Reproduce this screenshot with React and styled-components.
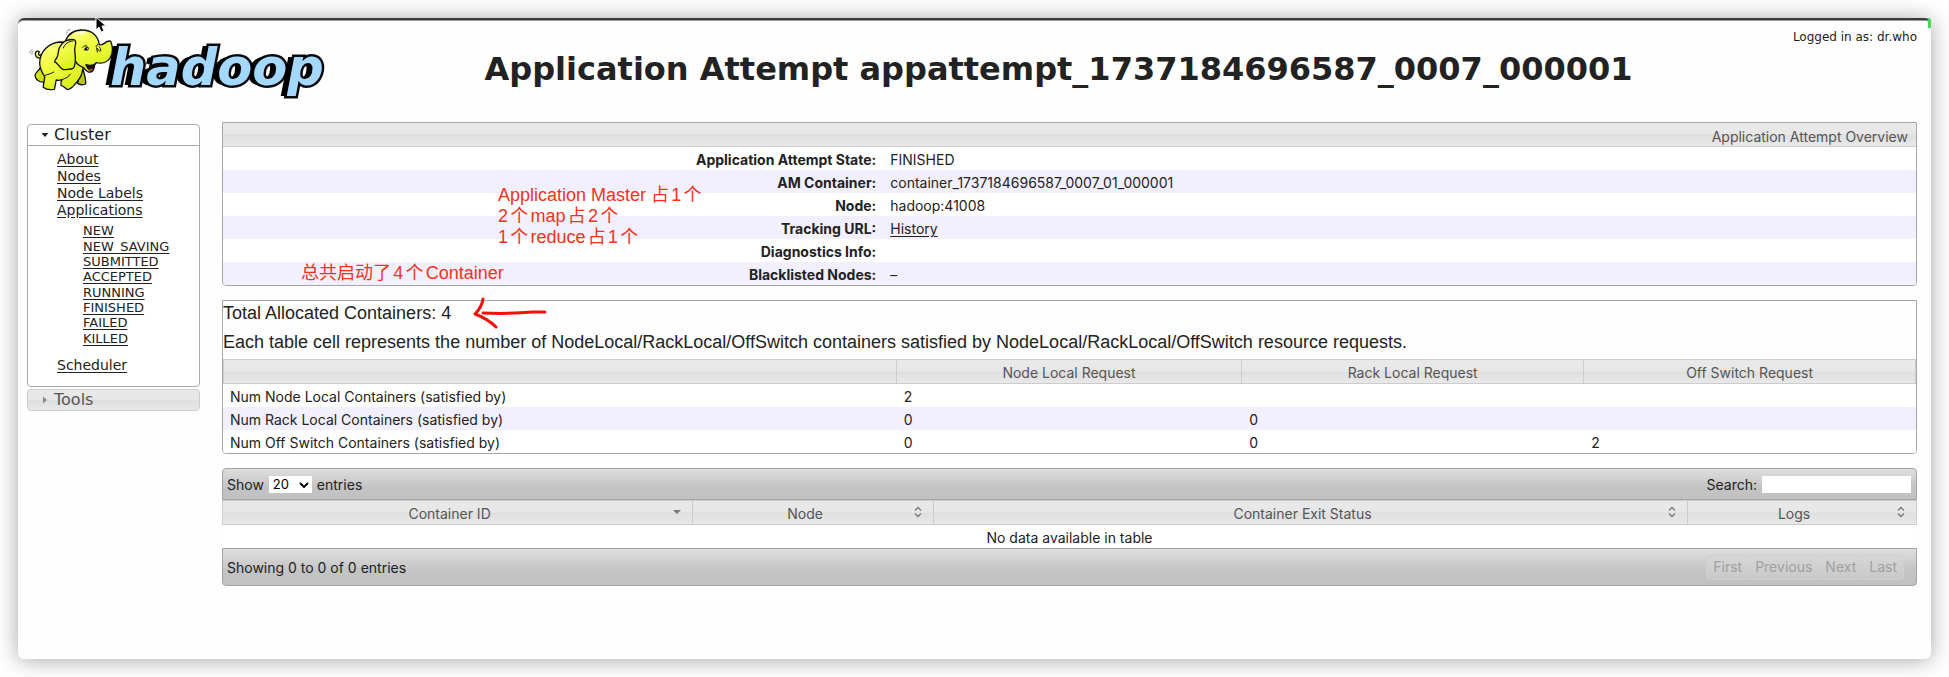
import React from 'react';
import styled, { createGlobalStyle } from 'styled-components';

const sans = '"Inter", "Liberation Sans", "Noto Sans CJK SC", sans-serif';
const wide = '"DejaVu Sans", sans-serif';
const grotesk = '"Liberation Sans", "Noto Sans CJK SC", sans-serif';
const glass = 'linear-gradient(#e9e9e9, #e7e7e7 48%, #dfdfdf 52%, #e8e8e8)';
const steel = 'linear-gradient(#dedede, #c3c3c3 62%, #c1c1c1)';

const GlobalStyle = createGlobalStyle`
  *, *::before, *::after { box-sizing: border-box; }
  body { margin: 0; background: #fff; color: #222; font: 14px ${sans}; }
  a { color: inherit; text-underline-offset: 2px; }
`;

const Desk = styled.div`
  display: flex;
  min-height: 100vh;
  padding: 18px;
`;

const Window = styled.div`
  position: relative;
  flex: 1;
  min-width: 0;
  background: #fefefe;
  border-top: 2px solid #3a3a3a;
  border-radius: 6px;
  box-shadow: 0 1px 22px rgba(0, 0, 0, 0.36), inset 0 1px 0 #9a9a9a;
`;

const GreenTab = styled.span`
  position: absolute;
  top: -2px;
  right: 0;
  width: 3px;
  height: 10px;
  border-top-right-radius: 3px;
  background: #43d85c;
`;

const Pointer = styled.svg`
  position: absolute;
  left: 77px;
  top: -4px;
  width: 12px;
  height: 18px;
`;

const Header = styled.header`
  display: flex;
  align-items: flex-start;
  height: 102px;
  padding: 8px 14px 0 10px;
`;

const Logo = styled.a`
  display: flex;
  flex: none;
  width: 300px;
  text-decoration: none;
`;

const Elephant = styled.svg`
  position: relative;
  z-index: 1;
  flex: none;
  width: 88px;
  height: 65px;
`;

const Wordmark = styled.span`
  margin: 10px 0 0 -6px;
  font: italic bold 51px/60px ${wide};
  color: #a5d8ff;
  -webkit-text-stroke: 5px #0a0a0a;
  paint-order: stroke fill;
  text-shadow: -2px 0 #000, -4px 0 #000, -6px 0 #000;
`;

const Title = styled.h1`
  flex: 1;
  margin: 21px 0 0;
  font: bold 32px/40px ${wide};
  text-align: center;
  white-space: nowrap;
`;

const User = styled.div`
  flex: none;
  width: 128px;
  font: 12px/18px ${wide};
  text-align: right;
  white-space: nowrap;
`;

const Body = styled.div`
  display: flex;
  align-items: flex-start;
  gap: 22px;
  padding: 0 14px 0 9px;
`;

const Sidebar = styled.nav`
  display: flex;
  flex: none;
  flex-direction: column;
  gap: 2px;
  width: 173px;
  padding-top: 2px;
  font-family: ${wide};
`;

const Section = styled.section`
  border: 1px solid #aaa;
  border-color: ${(p) => (p.$open ? '#aaa' : '#ccc')};
  border-radius: 4px;
  background: ${(p) => (p.$open ? '#fff' : glass)};
`;

const SectionToggle = styled.button`
  display: flex;
  align-items: center;
  gap: 4px;
  width: 100%;
  height: ${(p) => (p.$open ? 21 : 20)}px;
  padding: 0 0 0 12px;
  border: 0;
  border-bottom: ${(p) => (p.$open ? '1px solid #aaa' : '0')};
  background: none;
  color: ${(p) => (p.$open ? '#222' : '#555')};
  font: 16px/20px ${wide};
`;

const Links = styled.ul`
  margin: 0;
  padding: 5px 0 12px 29px;
  list-style: none;
  font-size: 14px;
  line-height: 17px;
`;

const StateLinks = styled.ul`
  display: grid;
  grid-auto-rows: 1fr;
  align-items: center;
  height: 123px;
  margin: 4px 0 11px;
  padding: 0 0 0 26px;
  list-style: none;
  font-size: 13px;
  line-height: 15px;
`;

const Main = styled.main`
  position: relative;
  display: flex;
  flex: 1;
  flex-direction: column;
  gap: 14px;
  min-width: 0;
`;

const Panel = styled.section`
  border: 1px solid #a6a6a6;
  border-radius: 0 0 4px 4px;
  overflow: hidden;
`;

const PanelHead = styled.h2`
  height: 24px;
  margin: 0;
  padding: 3px 8px 0;
  border-bottom: 1px solid #ccc;
  background: ${glass};
  color: #555;
  font: 14px/22px ${sans};
  text-align: right;
`;

const Table = styled.table`
  width: 100%;
  table-layout: fixed;
  border-collapse: separate;
  border-spacing: 0;
`;

const Row = styled.tr`
  height: 23px;
  background: ${(p) => (p.$tint ? '#f2f0ff' : '#fff')};
`;

const Label = styled.th`
  width: 39%;
  padding: 3px 7px 0;
  font-weight: 700;
  line-height: 20px;
  text-align: right;
`;

const Cell = styled.td`
  padding: 3px 7px 0;
  line-height: 20px;
  text-align: ${(p) => p.$align || 'left'};
`;

const RowName = styled.th`
  padding: 3px 7px 0;
  font-weight: 400;
  line-height: 20px;
  text-align: left;
`;

const ColumnHead = styled.th`
  width: ${(p) => p.$width || 'auto'};
  height: 25px;
  padding: 2px 7px 0;
  border: 1px solid #ccc;
  border-left-width: ${(p) => (p.$first ? 1 : 0)}px;
  background: ${glass};
  color: #555;
  font-weight: 400;
  line-height: 20px;
`;

const Note = styled.p`
  margin: 0 0 5px;
  font: 18px/24px ${grotesk};
`;

const SortButton = styled.button`
  display: flex;
  align-items: center;
  width: 100%;
  padding: 0;
  border: 0;
  background: none;
  color: inherit;
  font: 14px/20px ${sans};

  span { flex: 1; }
  svg { flex: none; margin-bottom: 4px; }
`;

const Bar = styled.div`
  display: flex;
  align-items: center;
  justify-content: space-between;
  height: ${(p) => (p.$bottom ? 38 : 32)}px;
  padding: 0 ${(p) => (p.$bottom ? 12 : 5)}px 0 4px;
  border: 1px solid #a3a3a3;
  border-radius: ${(p) => (p.$bottom ? '0 0 4px 4px' : '4px 4px 0 0')};
  background: ${steel};
`;

const Field = styled.label`
  display: flex;
  align-items: center;
  gap: 5px;
`;

const SizePicker = styled.span`
  position: relative;
  display: flex;

  svg { position: absolute; right: 3px; top: 6px; pointer-events: none; }
`;

const Select = styled.select`
  appearance: none;
  width: 43px;
  height: 17px;
  padding: 0 4px;
  border: 0;
  border-radius: 0;
  background: #fff;
  color: #000;
  font: 13px/17px ${sans};
`;

const SearchInput = styled.input`
  width: 149px;
  height: 17px;
  padding: 0 2px;
  border: 0;
  background: #fff;
  font: 13px ${sans};
`;

const Pager = styled.div`
  display: flex;
  height: 25px;
`;

const PageButton = styled.button`
  padding: 0 6px;
  border: 1px solid #cfcfcf;
  border-left-width: ${(p) => (p.$first ? 1 : 0)}px;
  border-radius: ${(p) => (p.$first ? '4px 0 0 4px' : p.$last ? '0 4px 4px 0' : 0)};
  background: linear-gradient(#d6d6d6, #c9c9c9);
  color: #a0a0a0;
  font: 14px/20px ${sans};
`;

const Remark = styled.div`
  position: absolute;
  left: ${(p) => p.$x}px;
  top: ${(p) => p.$y}px;
  color: #f6301b;
  font: 18px/21px ${grotesk};
  text-autospace: normal;
  white-space: pre;
`;

const RedArrow = styled.svg`
  position: absolute;
  left: 250px;
  top: 174px;
  width: 80px;
  height: 34px;
`;

const Caret = ({ open }) => (
  <svg width="10" height="10" viewBox="0 0 10 10" aria-hidden="true">
    <path d={open ? 'M1.5 3h7L5 7z' : 'M3 1.5v7L7 5z'} fill={open ? '#222' : '#888'} />
  </svg>
);

const SortIcon = ({ active }) => (
  <svg width="16" height="12" viewBox="0 0 16 12" aria-hidden="true">
    {active ? (
      <path d="M4 4h8L8 8z" fill="#777" />
    ) : (
      <path d="M5 4.5 8 1.5l3 3M5 7.5l3 3 3-3" fill="none" stroke="#777" strokeWidth="1.3" />
    )}
  </svg>
);

const HadoopElephant = () => (
  <Elephant viewBox="24 24 264 195" aria-hidden="true">
    <defs>
      <linearGradient id="hide" x1="0" y1="0" x2="0.5" y2="1">
        <stop offset="0" stopColor="#fbffa0" />
        <stop offset="0.4" stopColor="#f3ff4a" />
        <stop offset="1" stopColor="#dcf01c" />
      </linearGradient>
    </defs>
    <g stroke="#111" strokeWidth="4" strokeLinejoin="round" strokeLinecap="round" fill="url(#hide)">
      <path d="M64 112C54 118 45 110 46 100c1-7 9-9 12-4-3 3-4 8 1 10l8-4" />
      <path d="M176 150c4 14 1 26-3 40 8 5 17 5 24 2 1-14-3-28-8-44z" fill="#b9ca08" />
      <path d="M62 142c-5 10-17 16-17 24 1 12 14 22 27 20l14-18z" fill="#d0e212" />
      <path d="M122 66C84 68 60 96 59 128c0 18 8 31 15 42 0 12-5 22-4 32 8 7 22 8 33 6 3-9 3-19 6-28 6 2 11 1 17-1-3 6-4 12-3 17 8 2 13 9 19 13 8-1 17-9 22-15 8-9 17-19 21-32l7-30-18-62z" />
      <path d="M136 64c8-22 26-34 50-34 28 0 48 16 52 44 9 3 15-4 22-9 5-2 9-3 12-1 7 17 6 36-1 49-9 14-26 19-42 15-6 4-8 10-8 18-2 8-9 12-16 10-7-3-10-9-16-14-14-5-24-16-27-30z" />
      <path d="M198 134c9 3 17 3 26-1-1 8-2 15-7 20-10 0-15-9-19-19z" fill="#151500" />
      <path d="M206 149c4-4 9-4 13-1-3 6-9 6-13 1z" fill="#b4432c" stroke="none" />
      <path d="M162 59c-20-3-37 7-44 24-4 10-2 20-7 29-4 7-8 10-7 14 10 1 12 18 25 22 7 3 16-2 25-1 9 0 12-17 12-29 1-14-4-25-1-38 2-10 6-16-3-21z" />
      <path d="M130 84c5-13 15-20 29-21" fill="none" strokeWidth="3" />
      <path d="M76 166c8-4 15-3 25-10M128 178c10-3 18-7 23-16" fill="none" strokeWidth="3" />
      <path d="M188 82c3-4 8-6 13-4M228 80l7-9M232 96l-2-13 8 10M237 80c4 3 6 8 5 13" fill="none" strokeWidth="3" />
      <path d="M193 90c1-8 7-11 13-7 2 6-4 11-13 7z" fill="#111" strokeWidth="1" />
    </g>
    <circle cx="203" cy="86" r="2" fill="#fff" />
    <path d="M164 43c10-9 25-9 34-3-7 5-23 2-34 3z" fill="#fdffd6" />
    <path d="M29 100c1-6 4-9 8-11M36 104c-1-4 1-9 4-11M140 34c2-4 6-5 12-5M139 43c0-3 1-6 4-7" fill="none" stroke="#777" strokeWidth="2.5" />
  </Elephant>
);

const states = ['NEW', 'NEW_SAVING', 'SUBMITTED', 'ACCEPTED', 'RUNNING', 'FINISHED', 'FAILED', 'KILLED'];

const overview = [
  ['Application Attempt State:', 'FINISHED'],
  ['AM Container:', 'container_1737184696587_0007_01_000001'],
  ['Node:', 'hadoop:41008'],
  ['Tracking URL:', <a href="#history" key="history">History</a>],
  ['Diagnostics Info:', ''],
  ['Blacklisted Nodes:', '–'],
];

const requests = [
  ['Num Node Local Containers (satisfied by)', '2', '', ''],
  ['Num Rack Local Containers (satisfied by)', '0', '0', ''],
  ['Num Off Switch Containers (satisfied by)', '0', '0', '2'],
];

const columns = [
  ['Container ID', '27.8%'],
  ['Node', '14.2%'],
  ['Container Exit Status', '44.5%'],
  ['Logs', 'auto'],
];

export default function App() {
  return (
    <Desk>
      <GlobalStyle />
      <Window>
        <Header>
          <Logo href="#home">
            <HadoopElephant />
            <Wordmark>hadoop</Wordmark>
          </Logo>
          <Title>Application Attempt appattempt_1737184696587_0007_000001</Title>
          <User>Logged in as: dr.who</User>
        </Header>

        <Body>
          <Sidebar>
            <Section $open>
              <SectionToggle $open type="button">
                <Caret open />
                Cluster
              </SectionToggle>
              <Links>
                <li><a href="#about">About</a></li>
                <li><a href="#nodes">Nodes</a></li>
                <li><a href="#labels">Node Labels</a></li>
                <li>
                  <a href="#apps">Applications</a>
                  <StateLinks>
                    {states.map((s) => (
                      <li key={s}><a href={`#${s}`}>{s}</a></li>
                    ))}
                  </StateLinks>
                </li>
                <li><a href="#scheduler">Scheduler</a></li>
              </Links>
            </Section>
            <Section>
              <SectionToggle type="button">
                <Caret />
                Tools
              </SectionToggle>
            </Section>
          </Sidebar>

          <Main>
            <Panel>
              <PanelHead>Application Attempt Overview</PanelHead>
              <Table>
                <tbody>
                  {overview.map(([label, value], i) => (
                    <Row key={label} $tint={i % 2 === 1}>
                      <Label scope="row">{label}</Label>
                      <Cell>{value}</Cell>
                    </Row>
                  ))}
                </tbody>
              </Table>
            </Panel>

            <Panel>
              <Note>Total Allocated Containers: 4</Note>
              <Note>
                Each table cell represents the number of NodeLocal/RackLocal/OffSwitch containers
                satisfied by NodeLocal/RackLocal/OffSwitch resource requests.
              </Note>
              <Table>
                <thead>
                  <tr>
                    <ColumnHead $first $width="39.8%" />
                    <ColumnHead $width="20.4%">Node Local Request</ColumnHead>
                    <ColumnHead $width="20.2%">Rack Local Request</ColumnHead>
                    <ColumnHead>Off Switch Request</ColumnHead>
                  </tr>
                </thead>
                <tbody>
                  {requests.map(([name, ...values], i) => (
                    <Row key={name} $tint={i % 2 === 1}>
                      <RowName scope="row">{name}</RowName>
                      {values.map((v, n) => <Cell key={n}>{v}</Cell>)}
                    </Row>
                  ))}
                </tbody>
              </Table>
            </Panel>

            <section>
              <Bar>
                <Field>
                  Show
                  <SizePicker>
                    <Select defaultValue="20">
                      <option>20</option>
                      <option>40</option>
                      <option>60</option>
                    </Select>
                    <svg width="10" height="6" viewBox="0 0 10 6" aria-hidden="true">
                      <path d="M1 1l4 4 4-4" fill="none" stroke="#000" strokeWidth="2" />
                    </svg>
                  </SizePicker>
                  entries
                </Field>
                <Field>
                  Search:
                  <SearchInput type="text" />
                </Field>
              </Bar>
              <Table>
                <thead>
                  <tr>
                    {columns.map(([name, width], i) => (
                      <ColumnHead key={name} $first={i === 0} $width={width}>
                        <SortButton type="button">
                          <span>{name}</span>
                          <SortIcon active={i === 0} />
                        </SortButton>
                      </ColumnHead>
                    ))}
                  </tr>
                </thead>
                <tbody>
                  <Row>
                    <Cell colSpan={4} $align="center">No data available in table</Cell>
                  </Row>
                </tbody>
              </Table>
              <Bar $bottom>
                <span>Showing 0 to 0 of 0 entries</span>
                <Pager>
                  <PageButton type="button" disabled $first>First</PageButton>
                  <PageButton type="button" disabled>Previous</PageButton>
                  <PageButton type="button" disabled>Next</PageButton>
                  <PageButton type="button" disabled $last>Last</PageButton>
                </Pager>
              </Bar>
            </section>

            <Remark $x={276} $y={63}>
              {'Application Master 占1个\n2个map占2个\n1个reduce占1个'}
            </Remark>
            <Remark $x={79} $y={141}>总共启动了4个Container</Remark>
            <RedArrow viewBox="0 0 80 34" aria-hidden="true">
              <path
                d="M11 3c-1 7-5 12-8 15 8 3 15 7 21 13M11 17c20 1 38 0 50-1l12 0"
                fill="none"
                stroke="#f5100c"
                strokeWidth="3"
                strokeLinecap="round"
                strokeLinejoin="round"
              />
            </RedArrow>
          </Main>
        </Body>

        <GreenTab />
        <Pointer viewBox="0 0 12 18" aria-hidden="true">
          <path
            d="M1 1v13l3-3 2 5 3-1-2-5h4z"
            fill="#000"
            stroke="#fff"
            strokeWidth="1"
            strokeLinejoin="round"
          />
        </Pointer>
      </Window>
    </Desk>
  );
}
